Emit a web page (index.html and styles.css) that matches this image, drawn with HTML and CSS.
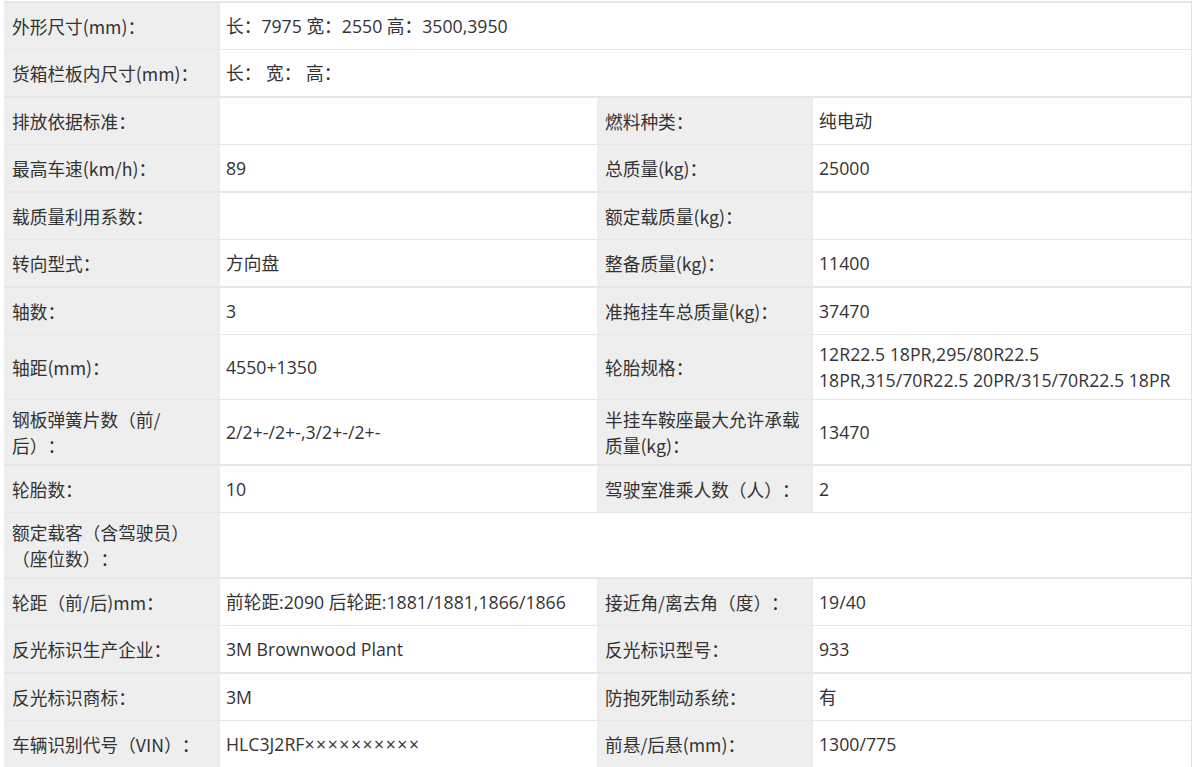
FILE: index.html
```html
<!DOCTYPE html>
<html lang="zh-CN">
<head>
<meta charset="utf-8">
<title>参数</title>
<link rel="stylesheet" href="styles.css">
</head>
<body>
<table class="spec">
  <colgroup><col class="c-label"><col class="c-value"><col class="c-label"><col class="c-value2"></colgroup>
  <tbody>
    <tr class="first"><th>外形尺寸(mm)：</th><td colspan="3">长：7975 宽：2550 高：3500,3950</td></tr>
    <tr><th>货箱栏板内尺寸(mm)：</th><td colspan="3">长：&nbsp;宽：&nbsp;高：</td></tr>
    <tr class="thick"><th>排放依据标准：</th><td></td><th>燃料种类：</th><td>纯电动</td></tr>
    <tr><th>最高车速(km/h)：</th><td>89</td><th>总质量(kg)：</th><td>25000</td></tr>
    <tr class="thick"><th>载质量利用系数：</th><td></td><th>额定载质量(kg)：</th><td></td></tr>
    <tr><th>转向型式：</th><td>方向盘</td><th>整备质量(kg)：</th><td>11400</td></tr>
    <tr class="thick"><th>轴数：</th><td>3</td><th>准拖挂车总质量(kg)：</th><td>37470</td></tr>
    <tr class="two"><th>轴距(mm)：</th><td>4550+1350</td><th>轮胎规格：</th><td>12R22.5 18PR,295/80R22.5 18PR,315/70R22.5 20PR/315/70R22.5 18PR</td></tr>
    <tr class="two"><th>钢板弹簧片数（前/后）：</th><td>2/2+-/2+-,3/2+-/2+-</td><th>半挂车鞍座最大允许承载质量(kg)：</th><td>13470</td></tr>
    <tr class="thick"><th>轮胎数：</th><td>10</td><th>驾驶室准乘人数（人）：</th><td>2</td></tr>
    <tr class="two"><th>额定载客（含驾驶员）（座位数）：</th><td colspan="3"></td></tr>
    <tr class="thick"><th>轮距（前/后)mm：</th><td>前轮距:2090 后轮距:1881/1881,1866/1866</td><th>接近角/离去角（度）：</th><td>19/40</td></tr>
    <tr><th>反光标识生产企业：</th><td>3M Brownwood Plant</td><th>反光标识型号：</th><td>933</td></tr>
    <tr class="thick"><th>反光标识商标：</th><td>3M</td><th>防抱死制动系统：</th><td>有</td></tr>
    <tr><th>车辆识别代号（VIN）：</th><td>HLC3J2RF<span class="mask">××××××××××</span></td><th>前悬/后悬(mm)：</th><td>1300/775</td></tr>
  </tbody>
</table>
</body>
</html>
```
FILE: styles.css
```css
html, body {
  margin: 0;
  padding: 0;
  background: #fff;
}
body {
  padding: 1px 3px 0 4px;
  color: #333;
}
.spec {
  width: 1187px;
  border-collapse: separate;
  border-spacing: 0;
  table-layout: fixed;
  border-right: 1px solid #e2e2e2;
  text-spacing-trim: space-all;
}
.c-label { width: 214px; }
.c-value { width: 379px; }
.c-value2 { width: 380px; }
.spec th, .spec td {
  height: 33px;
  padding: 6px 8px 7px;
  line-height: 26px;
  text-align: left;
  vertical-align: middle;
  font-weight: normal;
  border-top: 1px solid #e6e6e6;
}
.spec th {
  background: #eeeeee;
  font-family: "Noto Sans CJK SC", "Noto Sans", sans-serif;
  font-size: 17.7px;
  border-left: 2px solid #eeeeee;
  padding-left: 6px;
}
.spec tr > th:first-child {
  border-left: 0;
  padding-left: 8px;
}
.spec td {
  font-family: "Open Sans", "Noto Sans CJK SC", sans-serif;
  font-size: 17.7px;
  border-left: 2px solid #ebebeb;
  padding-left: 6px;
}
.spec .mask {
  letter-spacing: 1.5px;
}
.spec tr.two th, .spec tr.two td {
  padding-top: 6px;
  padding-bottom: 6px;
  height: 52px;
}
.spec tr.thick th, .spec tr.thick td,
.spec tr.first th, .spec tr.first td {
  border-top-width: 2px;
}
```
